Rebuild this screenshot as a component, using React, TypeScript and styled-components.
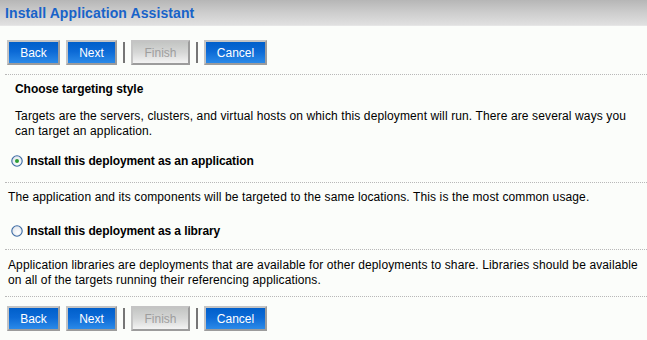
import React from "react";
import styled, { createGlobalStyle } from "styled-components";

const GlobalStyle = createGlobalStyle`
  html, body {
    margin: 0;
    padding: 0;
    background: #fbfdfa;
  }
  body {
    font-family: "Liberation Sans", Arial, sans-serif;
    font-size: 12px;
    color: #000;
  }
`;

const Page = styled.div`
  width: 647px;
  height: 340px;
  overflow: hidden;
  background: #fbfdfa;
`;

const Header = styled.div`
  height: 26px;
  box-sizing: border-box;
  display: flex;
  align-items: center;
  padding-left: 5px;
  background: linear-gradient(#b6b6b6 0%, #cdcdcd 50%, #e0e0e0 100%);
  border-bottom: 1px solid #e6e6e6;
`;

const Title = styled.h1`
  margin: 0;
  font-size: 14px;
  font-weight: bold;
  color: #1863c9;
  letter-spacing: 0.1px;
`;

const Toolbar = styled.div<{ $top: number }>`
  display: flex;
  align-items: center;
  gap: 6px;
  margin-top: ${(p) => p.$top}px;
  padding-left: 7px;
  height: 25px;
`;

const Button = styled.button<{ $w: number }>`
  box-sizing: border-box;
  width: ${(p) => p.$w}px;
  height: 25px;
  padding: 0;
  font-family: "Liberation Sans", Arial, sans-serif;
  font-size: 12px;
  border: 2px solid;
  border-color: #c4c4c4 #9c9c9c #9c9c9c #c4c4c4;
  color: #fff;
  background: linear-gradient(#005fca 0%, #0c6ad6 45%, #2b8ae8 100%);
  cursor: pointer;

  &:disabled {
    color: #9e9e9e;
    background: linear-gradient(#c3c5c3 0%, #d6d7d6 50%, #f3f3f3 100%);
    cursor: default;
  }
`;

const Separator = styled.span`
  width: 2px;
  height: 21px;
  background: #767676;
`;

const Divider = styled.hr<{ $top: number }>`
  margin: ${(p) => p.$top}px 0 0 5px;
  border: 0;
  border-top: 1px dotted #b8b8b8;
  height: 0;
`;

const Section = styled.div`
  padding: 0 15px;
`;

const SectionTitle = styled.div`
  margin-top: 7px;
  font-weight: bold;
  line-height: 15px;
  letter-spacing: -0.05px;
`;

const Paragraph = styled.p<{ $top: number; $left: number }>`
  margin: ${(p) => p.$top}px 0 0 ${(p) => p.$left}px;
  line-height: 15px;
  letter-spacing: 0.12px;
  white-space: nowrap;
`;

const RadioRow = styled.label<{ $top: number; $left: number }>`
  display: flex;
  align-items: center;
  gap: 4px;
  height: 16px;
  margin-top: ${(p) => p.$top}px;
  margin-left: ${(p) => p.$left}px;
  font-weight: bold;
  letter-spacing: -0.1px;
  cursor: pointer;
`;

const RadioIcon = ({ checked }: { checked: boolean }) => (
  <svg width="12" height="12" viewBox="0 0 12 12">
    <defs>
      <radialGradient id={checked ? "rg1" : "rg2"} cx="0.6" cy="0.65" r="0.7">
        <stop offset="0" stopColor="#ffffff" />
        <stop offset="1" stopColor="#dfe4ea" />
      </radialGradient>
    </defs>
    <circle
      cx="6"
      cy="6"
      r="5.2"
      fill={`url(#${checked ? "rg1" : "rg2"})`}
      stroke="#3b6aa3"
      strokeWidth="1.1"
    />
    {checked && <circle cx="6" cy="6" r="2" fill="#2e9e36" />}
  </svg>
);

const Buttons = ({ top }: { top: number }) => (
  <Toolbar $top={top}>
    <Button $w={53}>Back</Button>
    <Button $w={51}>Next</Button>
    <Separator />
    <Button $w={59} disabled>
      Finish
    </Button>
    <Separator />
    <Button $w={63}>Cancel</Button>
  </Toolbar>
);

export default function App() {
  return (
    <Page>
      <GlobalStyle />
      <Header>
        <Title>Install Application Assistant</Title>
      </Header>
      <Buttons top={14} />
      <Divider $top={9} />
      <Section>
        <SectionTitle>Choose targeting style</SectionTitle>
      </Section>
      <Paragraph $top={12} $left={15}>
        Targets are the servers, clusters, and virtual hosts on which this deployment will run. There are several ways you
        <br />
        can target an application.
      </Paragraph>
      <RadioRow $top={14} $left={11}>
        <RadioIcon checked />
        Install this deployment as an application
      </RadioRow>
      <Divider $top={13} />
      <Paragraph $top={7} $left={8}>
        The application and its components will be targeted to the same locations. This is the most common usage.
      </Paragraph>
      <RadioRow $top={18} $left={11}>
        <RadioIcon checked={false} />
        Install this deployment as a library
      </RadioRow>
      <Divider $top={10} />
      <Paragraph $top={8} $left={8}>
        Application libraries are deployments that are available for other deployments to share. Libraries should be available
        <br />
        on all of the targets running their referencing applications.
      </Paragraph>
      <Divider $top={8} />
      <Buttons top={9} />
    </Page>
  );
}
